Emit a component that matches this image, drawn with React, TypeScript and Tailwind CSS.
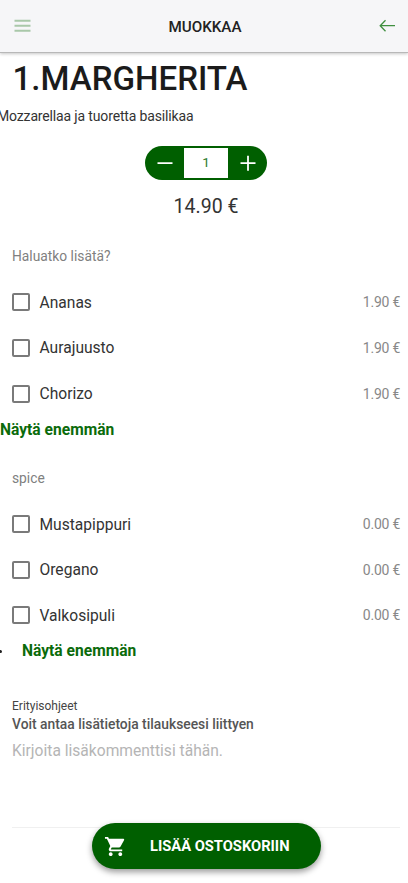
import { useState } from "react";
import { MdShoppingCart } from "react-icons/md";

interface Extra {
  name: string;
  price: string;
}

const TOPPINGS: Extra[] = [
  { name: "Ananas", price: "1.90 €" },
  { name: "Aurajuusto", price: "1.90 €" },
  { name: "Chorizo", price: "1.90 €" },
];

const SPICES: Extra[] = [
  { name: "Mustapippuri", price: "0.00 €" },
  { name: "Oregano", price: "0.00 €" },
  { name: "Valkosipuli", price: "0.00 €" },
];

function Header() {
  return (
    <header className="flex h-[53px] shrink-0 items-center justify-between border-b border-[#b8b8b8] bg-[#f6f6f8] pr-3 pl-[14px] shadow-[0_1px_3px_rgba(0,0,0,0.22)]">
      <button type="button" aria-label="Valikko">
        <svg width="17" height="14" viewBox="0 0 17 14" stroke="#a9c8a9" strokeWidth="1.9">
          <path d="M0.5 1.7h16M0.5 6.7h16M0.5 11.7h16" />
        </svg>
      </button>
      <h1 className="pt-[2px] text-[15.2px] font-medium text-[#222]">MUOKKAA</h1>
      <button type="button" aria-label="Takaisin">
        <svg width="17" height="14" viewBox="0 0 17 14" fill="none" stroke="#3f8f3f" strokeWidth="1.3">
          <path d="M16 6.7H1.5M6.5 1.2L1.2 6.7l5.3 5.5" />
        </svg>
      </button>
    </header>
  );
}

function Stepper() {
  const [count, setCount] = useState(1);

  return (
    <div className="flex h-[34px] w-[122px] overflow-hidden rounded-full bg-[#005f00] text-white">
      <button
        type="button"
        aria-label="Vähennä"
        className="flex w-[39px] items-center justify-center"
        onClick={() => setCount(Math.max(1, count - 1))}
      >
        <svg width="16" height="16" viewBox="0 0 16 16" stroke="currentColor" strokeWidth="1.8">
          <path d="M0.5 8.2h15" />
        </svg>
      </button>
      <span className="my-[2px] flex w-[44px] items-center justify-center bg-white text-[13.5px] text-[#2c7a2c]">
        {count}
      </span>
      <button
        type="button"
        aria-label="Lisää"
        className="flex flex-1 items-center justify-center"
        onClick={() => setCount(count + 1)}
      >
        <svg width="16" height="16" viewBox="0 0 16 16" stroke="currentColor" strokeWidth="1.8">
          <path d="M0.5 8.2h15M8 0.7v15" />
        </svg>
      </button>
    </div>
  );
}

function ExtraList({ title, extras }: { title: string; extras: Extra[] }) {
  return (
    <section>
      <h3 className="pl-3 text-[13.8px] leading-5 text-[#808080]">{title}</h3>
      <ul className="pt-[13.6px]">
        {extras.map((extra) => (
          <li key={extra.name} className="flex h-[45.6px] items-center pr-2 pl-3">
            <label className="flex flex-1 items-center">
              <input
                type="checkbox"
                className="size-[18px] appearance-none rounded-[2px] border-2 border-[#7a7a7a] checked:bg-[#005f00]"
              />
              <span className="pt-[2px] pl-[9.5px] text-[15.6px] text-[#333]">{extra.name}</span>
            </label>
            <span className="pt-px text-[14px] tracking-[-0.25px] text-[#888]">{extra.price}</span>
          </li>
        ))}
      </ul>
    </section>
  );
}

export default function App() {
  return (
    <div className="flex h-[883px] w-[408px] flex-col overflow-hidden bg-white font-[Roboto,sans-serif]">
      <Header />

      <main className="flex flex-1 flex-col">
        <h2 className="pt-[5px] pl-[12.5px] text-[33.1px] leading-[42px] font-medium text-[#1b1b1b]">1.MARGHERITA</h2>
        <p className="-ml-[3px] pt-[6px] text-[14px] leading-5 tracking-[-0.15px] text-[#333]">
          Mozzarellaa ja tuoretta basilikaa
        </p>

        <div className="flex flex-col items-center pt-[19.5px] pl-1">
          <Stepper />
          <p className="pt-[13.5px] text-[19.5px] leading-7 text-[#333]">14.90 €</p>
        </div>

        <div className="pt-[25px]">
          <ExtraList title="Haluatko lisätä?" extras={TOPPINGS} />
          <button type="button" className="block pt-[1.5px] text-[15.6px] leading-6 font-bold text-[#0b6b0b]">
            Näytä enemmän
          </button>
        </div>

        <div className="pt-[26px]">
          <ExtraList title="spice" extras={SPICES} />
          <div className="flex items-center pt-px">
            <span className="-ml-[1px] size-[3px] rounded-full bg-[#222]" />
            <button type="button" className="ml-5 text-[15.6px] leading-6 font-bold text-[#0b6b0b]">
              Näytä enemmän
            </button>
          </div>
        </div>

        <div className="flex flex-col pt-[34.5px] pr-2 pl-3">
          <span className="text-[12px] leading-4 text-[#444]">Erityisohjeet</span>
          <label htmlFor="comment" className="text-[13.85px] leading-5 font-medium text-[#555]">
            Voit antaa lisätietoja tilaukseesi liittyen
          </label>
          <textarea
            id="comment"
            placeholder="Kirjoita lisäkommenttisi tähän."
            className="mt-[5.5px] h-[89px] resize-none border-b border-[#f0f0f0] text-[15.6px] leading-6 outline-none placeholder:text-[#b5b5b5]"
          />
        </div>
      </main>

      <footer className="-mt-[7px] flex h-[60px] shrink-0 justify-center pl-[5px]">
        <button
          type="button"
          className="relative flex h-[46px] w-[229px] items-center rounded-full bg-[#005f00] pl-3 text-white shadow-[0_3px_6px_rgba(0,0,0,0.4)]"
        >
          <MdShoppingCart className="size-[23px]" />
          <span className="pt-px pl-[23px] text-[14.7px] font-bold">LISÄÄ OSTOSKORIIN</span>
        </button>
      </footer>
    </div>
  );
}
